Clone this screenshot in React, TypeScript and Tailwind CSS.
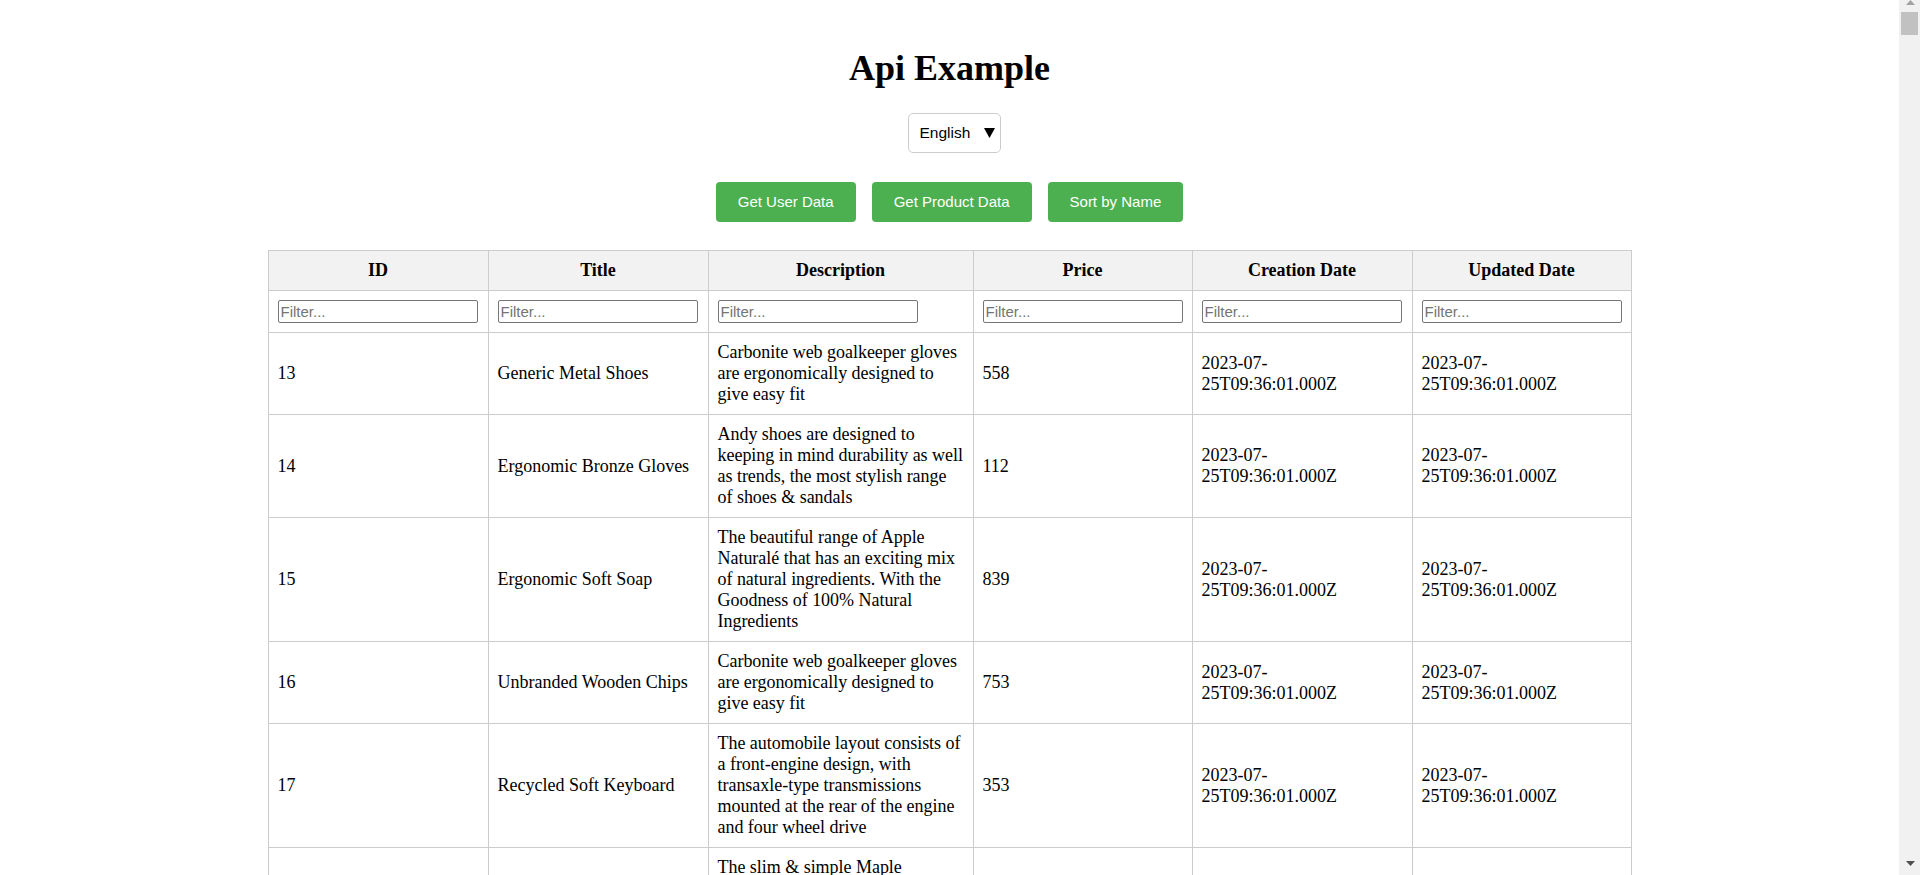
import React from "react";

type Row = { id: number; title: string; description: string; price: number };

const DATE = "2023-07-25T09:36:01.000Z";

const rows: Row[] = [
  {
    id: 13,
    title: "Generic Metal Shoes",
    description:
      "Carbonite web goalkeeper gloves are ergonomically designed to give easy fit",
    price: 558,
  },
  {
    id: 14,
    title: "Ergonomic Bronze Gloves",
    description:
      "Andy shoes are designed to keeping in mind durability as well as trends, the most stylish range of shoes & sandals",
    price: 112,
  },
  {
    id: 15,
    title: "Ergonomic Soft Soap",
    description:
      "The beautiful range of Apple Naturalé that has an exciting mix of natural ingredients. With the Goodness of 100% Natural Ingredients",
    price: 839,
  },
  {
    id: 16,
    title: "Unbranded Wooden Chips",
    description:
      "Carbonite web goalkeeper gloves are ergonomically designed to give easy fit",
    price: 753,
  },
  {
    id: 17,
    title: "Recycled Soft Keyboard",
    description:
      "The automobile layout consists of a front-engine design, with transaxle-type transmissions mounted at the rear of the engine and four wheel drive",
    price: 353,
  },
  {
    id: 18,
    title: "Handcrafted Granite Mouse",
    description:
      "The slim & simple Maple Gaming Keyboard from Dev Byte comes with a sleek body and 7- Color RGB LED Back-lighting for smart functionality",
    price: 427,
  },
  {
    id: 19,
    title: "Practical Plastic Hat",
    description:
      "Boston's most advanced compression wear technology increases muscle oxygenation, stabilizes active muscles",
    price: 214,
  },
  {
    id: 20,
    title: "Licensed Steel Chair",
    description:
      "Ergonomic executive chair upholstered in bonded black leather and PVC padded seat and back for all-day comfort and support",
    price: 671,
  },
];

const headers = ["ID", "Title", "Description", "Price", "Creation Date", "Updated Date"];

const cell =
  "border border-[#cccccc] px-[9px] py-[9px] text-left align-middle text-[18px] leading-[21px]";

function FakeScrollbar() {
  return (
    <div className="fixed right-0 top-0 flex h-screen w-[21px] flex-col bg-[#f1f1f1]">
      <div className="flex h-[12px] justify-center pl-[1px]">
        <svg width="9" height="5" viewBox="0 0 9 5" aria-hidden="true">
          <polygon points="4.5,0 9,5 0,5" fill="#a3a3a3" />
        </svg>
      </div>
      <div className="mx-[2px] h-[23px] bg-[#c1c1c1]" />
      <div className="flex-1" />
      <div className="flex h-[14px] justify-center pl-[1px] pb-[9px]">
        <svg width="9" height="5" viewBox="0 0 9 5" aria-hidden="true">
          <polygon points="0,0 9,0 4.5,5" fill="#505050" />
        </svg>
      </div>
    </div>
  );
}

export default function App() {
  return (
    <div className="w-[1899px] bg-white pt-[48px] pb-[20px] font-['Liberation_Serif',serif] text-black">
      <h1 className="text-center text-[36px] font-bold leading-[41px]">Api Example</h1>

      <div className="mt-[24px] flex justify-center">
        <div className="ml-[9px] flex h-[40px] w-[93px] items-center justify-between rounded-[5px] border border-[#cccccc] bg-white pl-[11px] pr-[5px] font-['Liberation_Sans',Arial,sans-serif] text-[15.5px] text-black">
          <span>English</span>
          <svg width="11" height="10" viewBox="0 0 11 10" aria-hidden="true">
            <polygon points="0,0 11,0 5.5,10" fill="#000" />
          </svg>
        </div>
      </div>

      <div className="mt-[29px] flex justify-center gap-[16px] font-['Liberation_Sans',Arial,sans-serif]">
        {["Get User Data", "Get Product Data", "Sort by Name"].map((b) => (
          <button
            key={b}
            className="h-[40px] rounded-[4px] bg-[#4CAF50] px-[22px] text-[15px] text-white"
          >
            {b}
          </button>
        ))}
      </div>

      <table className="mx-auto mt-[28px] w-[1363px] table-fixed border-collapse">
        <colgroup>
          <col className="w-[220px]" />
          <col className="w-[220px]" />
          <col className="w-[265px]" />
          <col className="w-[219px]" />
          <col className="w-[220px]" />
          <col className="w-[219px]" />
        </colgroup>
        <thead>
          <tr className="bg-[#f2f2f2]">
            {headers.map((h) => (
              <th
                key={h}
                className="border border-[#cccccc] px-[9px] py-[9px] text-center align-middle text-[18px] font-bold leading-[21px]"
              >
                {h}
              </th>
            ))}
          </tr>
          <tr>
            {headers.map((h) => (
              <td key={h} className="border border-[#cccccc] px-[9px] py-[9px] align-middle">
                <input
                  type="text"
                  placeholder="Filter..."
                  className="block h-[23px] w-[200px] rounded-[2px] border border-[#767676] bg-white px-[2px] font-['Liberation_Sans',Arial,sans-serif] text-[15px] text-black placeholder:text-[#757575]"
                />
              </td>
            ))}
          </tr>
        </thead>
        <tbody>
          {rows.map((r) => (
            <tr key={r.id}>
              <td className={cell}>{r.id}</td>
              <td className={cell}>{r.title}</td>
              <td className={`${cell} tracking-[-0.03px]`}>{r.description}</td>
              <td className={cell}>{r.price}</td>
              <td className={cell}>{DATE}</td>
              <td className={cell}>{DATE}</td>
            </tr>
          ))}
        </tbody>
      </table>

      <FakeScrollbar />
    </div>
  );
}
